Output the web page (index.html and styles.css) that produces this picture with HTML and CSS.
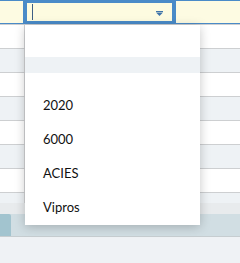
FILE: index.html
```html
<!DOCTYPE html>
<html>
<head>
<meta charset="utf-8">
<link rel="stylesheet" href="styles.css">
</head>
<body>
<div class="page">
  <div class="header">
    <div class="hcell first"></div>
    <div class="hcell editor">
      <span class="caret"></span>
      <svg class="arrow" width="7" height="5" viewBox="0 0 7 5"><rect x="0" y="0" width="7" height="1" fill="#3f74a9"/><polygon points="0,1.5 7,1.5 3.5,5" fill="#3f74a9"/></svg>
    </div>
    <div class="hcell rest"></div>
  </div>
  <div class="grid">
    <div class="row"><div class="c1"></div><div class="c2"></div></div>
    <div class="row alt"><div class="c1"></div><div class="c2"></div></div>
    <div class="row"><div class="c1"></div><div class="c2"></div></div>
    <div class="row alt"><div class="c1"></div><div class="c2"></div></div>
    <div class="row"><div class="c1"></div><div class="c2"></div></div>
    <div class="row alt"><div class="c1"></div><div class="c2"></div></div>
    <div class="row"><div class="c1"></div><div class="c2"></div></div>
    <div class="row short alt"><div class="c1"></div><div class="c2"></div></div>
  </div>
  <div class="filler"></div>
  <div class="scrollbar"><div class="thumb"></div></div>
  <div class="footer"></div>

  <div class="dropdown">
    <div class="blank top"></div>
    <div class="blank band"></div>
    <div class="blank gap"></div>
    <div class="item">2020</div>
    <div class="item">6000</div>
    <div class="item">ACIES</div>
    <div class="item">Vipros</div>
  </div>
</div>
</body>
</html>
```
FILE: styles.css
```css
html, body {
  margin: 0;
  padding: 0;
}
body {
  width: 240px;
  height: 263px;
  overflow: hidden;
  background: #eff2f5;
  font-family: Lato, "Open Sans", sans-serif;
}
.page {
  position: relative;
  width: 240px;
  height: 263px;
  display: flex;
  flex-direction: column;
}
.header {
  height: 24px;
  display: flex;
  box-sizing: border-box;
  border-top: 1px solid #4a8bc8;
  border-bottom: 1px solid #4a8bc8;
  background: #fdfbe2;
  flex: none;
}
.hcell {
  height: 100%;
}
.hcell.first {
  width: 23px;
}
.hcell.editor {
  position: relative;
  width: 153px;
  box-sizing: border-box;
  margin-top: -1px;
  margin-bottom: -1px;
  height: 24px;
  border: solid #4a8bc8;
  border-width: 3px 4px;
  background: #fdfbe0;
  display: flex;
  align-items: center;
  padding-left: 5px;
}
.caret {
  display: block;
  width: 1px;
  height: 16px;
  background: #3d5f85;
}
.arrow {
  position: absolute;
  left: 129px;
  top: 8px;
}
.hcell.rest {
  flex: 1;
}
.grid {
  flex: none;
  display: flex;
  flex-direction: column;
}
.row {
  height: 24px;
  box-sizing: border-box;
  border-top: 1px solid #cdcfd1;
  display: flex;
  background: #ffffff;
}
.row.alt {
  background: #eef2f5;
}
.row.short {
  height: 11px;
}
.c1 {
  width: 24px;
  border-right: 1px solid #d2d3d5;
}
.c2 {
  flex: 1;
}
.filler {
  height: 11px;
  background: #e8ebed;
  flex: none;
}
.scrollbar {
  height: 23px;
  box-sizing: border-box;
  border-bottom: 1px solid #c6cdd0;
  background: #d1dee3;
  flex: none;
  display: flex;
}
.thumb {
  width: 11px;
  background: #a2c4cf;
  border-top-right-radius: 2px;
}
.footer {
  flex: 1;
  background: #eff2f5;
}
.dropdown {
  position: absolute;
  left: 25px;
  top: 25px;
  width: 175px;
  height: 200px;
  background: #ffffff;
  box-shadow: 0 2px 10px rgba(0, 0, 0, 0.22);
  display: flex;
  flex-direction: column;
}
.blank.top {
  height: 32px;
}
.blank.band {
  height: 16px;
  background: #eef2f5;
}
.blank.gap {
  height: 15px;
}
.item {
  height: 34px;
  line-height: 34px;
  padding-left: 18px;
  font-size: 13px;
  color: #111111;
}
```
